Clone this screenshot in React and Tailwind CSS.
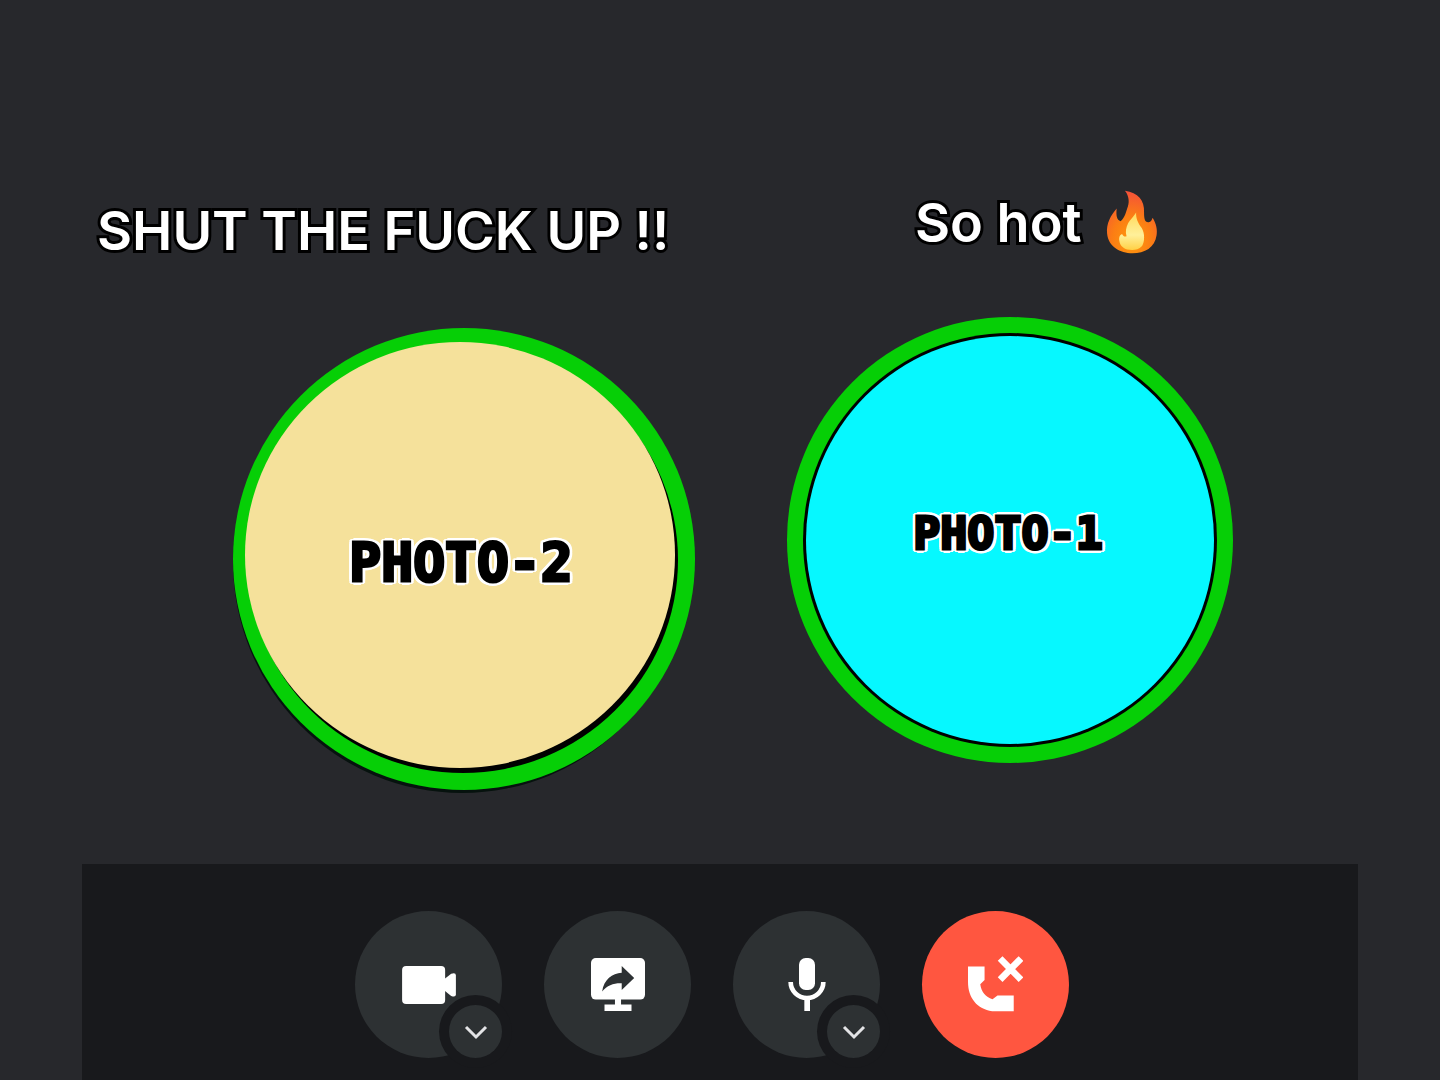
import React from 'react';

const FireIcon = () => (
  <svg viewBox="649 58 155 194" className="w-[52px] h-16" role="img" aria-label="fire">
    <defs>
      <radialGradient id="flame" cx="0.5" cy="0.8" r="0.8">
        <stop offset="0" stopColor="#ff9a0c" />
        <stop offset="0.5" stopColor="#fb7d14" />
        <stop offset="1" stopColor="#f4503a" />
      </radialGradient>
      <linearGradient id="core" x1="0" y1="0" x2="0" y2="1">
        <stop offset="0" stopColor="#ffd95a" />
        <stop offset="0.6" stopColor="#fff09a" />
        <stop offset="1" stopColor="#ffd045" />
      </linearGradient>
    </defs>
    <path
      d="M705 60C745 65 765 90 763 125C763 145 765 157 777 156C784 155 787 148 789 142C800 160 804 180 801 195C796 232 765 250 728 250C690 250 655 230 651 190C648 160 662 135 680 114C678 135 680 148 692 153C706 140 708 125 714 108C720 90 715 72 705 60Z"
      fill="url(#flame)"
    />
    <path
      d="M739 126C738 145 745 158 756 173C766 190 765 215 757 228C748 238 738 240 727 240C705 240 690 230 688 212C686 200 691 192 697 192C700 198 705 201 710 198C706 185 708 172 715 158C721 148 732 138 739 126Z"
      fill="url(#core)"
    />
  </svg>
);

const CameraIcon = () => (
  <svg viewBox="186 228 160 113" className="w-[54px] h-[38px]" fill="white" aria-hidden="true">
    <rect x="186" y="228" width="128" height="113" rx="12" />
    <path d="M308 270L332 251Q346 246 346 256V312Q346 322 332 317L308 298Z" />
  </svg>
);

const ScreenIcon = () => (
  <svg viewBox="752 206 160 157" className="w-[54px] h-[53px]" fill="white" aria-hidden="true">
    <rect x="752" y="206" width="160" height="123" rx="14" />
    <path d="M823 327H841V344H872V363H792V344H823Z" />
    <path d="M785 305C790 270 815 252 843 250V230L880 265L843 301V281C820 280 800 287 785 305Z" fill="#2d3133" />
  </svg>
);

const MicIcon = () => (
  <svg viewBox="203 205 114 159" className="w-[38px] h-[53px]" fill="white" aria-hidden="true">
    <rect x="236" y="205" width="48" height="96" rx="20" />
    <path d="M211 277A49 48 0 0 0 309 277" fill="none" stroke="white" strokeWidth="14" />
    <path d="M252 324H269V364H252Z" />
  </svg>
);

const HangUpIcon = () => (
  <svg viewBox="747 198 166 174" className="w-[55px] h-[58px]" fill="white" aria-hidden="true">
    <path d="M747 229H797V270L784 283C787 305 800 322 821 328L836 317H885V364H820C775 357 747 325 747 275Z" />
    <path d="M844 205L907 269M907 205L844 269" stroke="white" strokeWidth="20" />
  </svg>
);

const CallButton = ({ label, danger, menuLabel, children }) => (
  <div className="relative">
    <button
      type="button"
      aria-label={label}
      className={`flex items-center justify-center size-[147px] rounded-full ${danger ? 'bg-[#ff5640]' : 'bg-[#2d3133]'}`}
    >
      {children}
    </button>
    {menuLabel && (
      <button
        type="button"
        aria-label={menuLabel}
        className="absolute right-0 bottom-0 flex items-center justify-center size-[53px] rounded-full bg-[#2d3133] ring-10 ring-[#18191c]"
      >
        <svg viewBox="0 0 24 16" className="w-6 h-4" fill="none" aria-hidden="true">
          <path d="M2 3L12 13L22 3" stroke="#e3e4e6" strokeWidth="3" />
        </svg>
      </button>
    )}
  </div>
);

const captionClass =
  'flex items-center h-16 whitespace-nowrap text-white text-[54px] font-semibold [-webkit-text-stroke:6px_black] [paint-order:stroke_fill] [stroke-linejoin:round]';
const photoLabelClass =
  'absolute font-["DejaVu_Sans_Mono",monospace] font-bold leading-none whitespace-nowrap text-black [-webkit-text-stroke:3px_black] [text-shadow:4px_0_white,-4px_0_white,0_4px_white,0_-4px_white,3px_3px_white,-3px_3px_white,3px_-3px_white,-3px_-3px_white,4px_2px_white,-4px_2px_white,4px_-2px_white,-4px_-2px_white]';

const App = () => {
  return (
    <div className='flex flex-col min-h-screen bg-[#27282c] font-["Inter",sans-serif]'>
      <main className="flex flex-1 items-start justify-center gap-[92px] pt-[190px] pr-[110px]">
        {/* Left caller */}
        <section className="flex flex-col w-[598px] pt-2">
          <h2 className={captionClass}>SHUT THE FUCK UP !!</h2>
          <div className="relative self-end flex items-center justify-center mt-[63px]">
            <svg viewBox="231 325 464 470" className="w-[464px] h-[470px]" aria-hidden="true">
              <ellipse cx="462" cy="562" rx="229" ry="231" fill="#06120e" />
              <ellipse cx="464" cy="559" rx="231" ry="231" fill="#06cf06" />
              <ellipse cx="463" cy="560" rx="215" ry="213" fill="black" />
              <ellipse cx="460" cy="555" rx="215" ry="213" fill="#f5e19b" />
            </svg>
            <p className={`${photoLabelClass} text-[53px] pt-1 pr-1`}>PHOTO-2</p>
          </div>
        </section>

        {/* Right caller */}
        <section className="flex flex-col w-[446px]">
          <h2 className={`${captionClass} ml-32 gap-6`}>
            So hot <FireIcon />
          </h2>
          <div className="relative flex items-center justify-center mt-[63px]">
            <svg viewBox="787 318 446 448" className="w-[446px] h-[448px]" aria-hidden="true">
              <circle cx="1010" cy="541" r="223" fill="#06cf06" />
              <circle cx="1010" cy="541" r="207" fill="black" />
              <circle cx="1010" cy="541" r="204" fill="#06f8ff" />
            </svg>
            <p className={`${photoLabelClass} text-[45px] pr-1 pb-4`}>PHOTO-1</p>
          </div>
        </section>
      </main>

      {/* Call controls */}
      <footer className="flex justify-center gap-[42px] mx-[82px] pt-[47px] pr-4 pb-[22px] bg-[#18191c]">
        <CallButton label="Turn on camera" menuLabel="Camera options">
          <CameraIcon />
        </CallButton>
        <CallButton label="Share your screen">
          <ScreenIcon />
        </CallButton>
        <CallButton label="Mute" menuLabel="Microphone options">
          <MicIcon />
        </CallButton>
        <CallButton label="Disconnect" danger>
          <HangUpIcon />
        </CallButton>
      </footer>
    </div>
  );
};

export default App;
